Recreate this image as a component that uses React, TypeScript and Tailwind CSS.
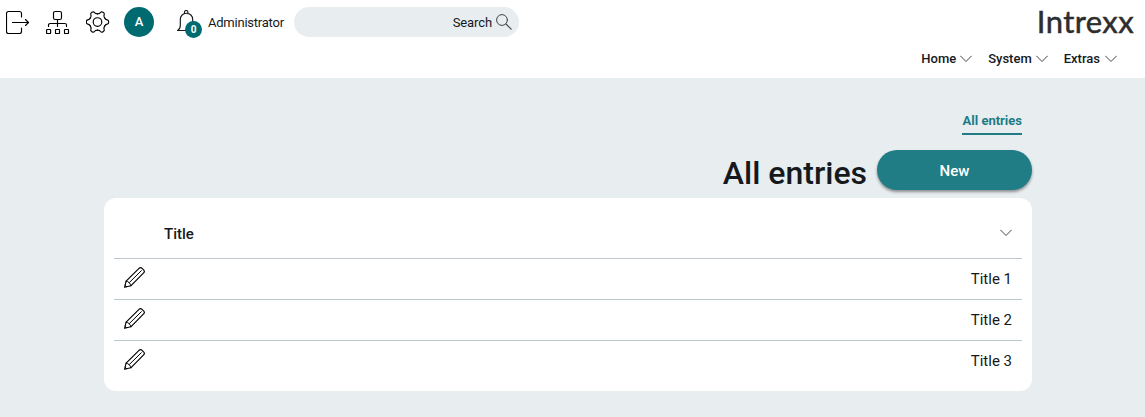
import type { ReactNode } from "react";

const navItems = ["Home", "System", "Extras"];
const entries = ["Title 1", "Title 2", "Title 3"];
const gearTeeth = [0, 60, 120, 180, 240, 300];

function LineIcon({
  width,
  height,
  className = "",
  children,
}: {
  width: number;
  height: number;
  className?: string;
  children: ReactNode;
}) {
  return (
    <svg
      width={width}
      height={height}
      viewBox={`0 0 ${width} ${height}`}
      fill="none"
      stroke="currentColor"
      strokeWidth="1.15"
      strokeLinecap="round"
      strokeLinejoin="round"
      className={`shrink-0 ${className}`}
      aria-hidden="true"
    >
      {children}
    </svg>
  );
}

function LogoutIcon() {
  return (
    <LineIcon width={24} height={24}>
      <path d="M15.500 7V3.500a2 2 0 0 0-2-2h-11a2 2 0 0 0-2 2v18a2 2 0 0 0 2 2h11a2 2 0 0 0 2-2V18" />
      <path d="M6.500 12.500h16M19.500 9.500l3 3-3 3" />
    </LineIcon>
  );
}

function SitemapIcon() {
  return (
    <LineIcon width={24} height={24}>
      <rect x="7.500" y="1.500" width="8" height="8" rx="1.800" />
      <path d="M11.500 9.500v7M2.500 16.500v-1.400a1.600 1.600 0 0 1 1.600-1.600h14.800a1.600 1.600 0 0 1 1.600 1.600v1.400" />
      <rect x=".6" y="19.500" width="4" height="4" rx=".5" />
      <rect x="9.500" y="19.500" width="4" height="4" rx=".5" />
      <rect x="18.500" y="19.500" width="4" height="4" rx=".5" />
    </LineIcon>
  );
}

function GearIcon() {
  return (
    <LineIcon width={24} height={24}>
      <circle cx="11.500" cy="12" r="4.300" />
      <g transform="translate(-.5 0)">
        {gearTeeth.map((angle) => (
          <path
            key={angle}
            d="M19.100 7.900C19.900 9.300 20.500 9.900 21.700 9.900Q23.200 10 23.200 12Q23.200 14 21.700 14.100C20.500 14.100 19.900 14.700 19.100 16.100"
            transform={`rotate(${angle} 12 12)`}
          />
        ))}
      </g>
    </LineIcon>
  );
}

function BellIcon() {
  return (
    <LineIcon width={20} height={24}>
      <path d="M7.500 3.700V2.200a1.700 1.700 0 0 1 3.400 0v1.500M.6 20.500h17.200l-2.100-4.200V9.500c0-3.600-2.700-6.300-6.200-6.300S3.300 5.900 3.300 9.500v6c0 2-.8 3.800-2.700 5z" />
    </LineIcon>
  );
}

function SearchIcon() {
  return (
    <LineIcon width={16} height={16} className="text-[#444]">
      <circle cx="6" cy="6" r="5.400" strokeWidth="1" />
      <path d="m10 10 5.200 5.200" />
    </LineIcon>
  );
}

function ChevronIcon() {
  return (
    <LineIcon width={12} height={8} className="text-[#444]">
      <path d="m.5 1 5.500 5.500L11.500 1" strokeWidth="1" />
    </LineIcon>
  );
}

function PencilIcon() {
  return (
    <LineIcon width={21} height={21}>
      <path d="M.6 20.300 2.100 14.200 15 1.400c.9-.9 2.100-.9 3-.1l1.600 1.600c.9.900.9 2.100 0 3L6.800 18.800z" />
      <path d="M2.100 14.200c2.400.1 4.500 2.200 4.700 4.600" strokeWidth="1" />
      <path d="M5.400 15.500 17.300 3.700" strokeWidth="1" />
      <path d="m1.100 18.300 1.500 1.500" strokeWidth="1" />
    </LineIcon>
  );
}

export default function App() {
  return (
    <div className="min-h-screen bg-[#e8edf0] font-['Roboto',sans-serif] text-[#15191c]">
      <header className="h-[78px] bg-white">
        <div className="flex h-11 items-center pl-1.5">
          <div className="flex items-center gap-4 text-black">
            <LogoutIcon />
            <SitemapIcon />
            <GearIcon />
          </div>
          <div className="ml-3.5 flex size-[30px] items-center justify-center rounded-full bg-[#006a71] text-[13px] font-medium text-white">
            A
          </div>
          <div className="relative ml-[23px] h-6 w-5">
            <BellIcon />
            <span className="absolute top-[11px] left-2 flex size-[17px] items-center justify-center rounded-full bg-[#006a71] text-[10px] font-bold text-white">
              0
            </span>
          </div>
          <span className="ml-[11px] w-[76px] pt-0.5 text-[13px] tracking-[-0.23px] whitespace-nowrap">
            Administrator
          </span>
          <div className="ml-[10px] flex h-[30px] w-[225px] items-center justify-end gap-1 rounded-full bg-[#e8edf0] pr-[7px] text-[13px]">
            <span className="pt-0.5 tracking-[-0.1px]">Search</span>
            <SearchIcon />
          </div>
          <div className="mr-[11px] mb-0.5 ml-auto font-['Lato',sans-serif] text-[31px] leading-none tracking-[0.4px] text-[#2d2d2f] [-webkit-text-stroke:0.5px_#2d2d2f]">
            Intrexx
          </div>
        </div>
        <nav className="flex h-[29px] items-center justify-end gap-4 pr-7 text-[13px] font-medium">
          {navItems.map((item) => (
            <div key={item} className="flex items-center gap-1 last:gap-[5px]">
              <span>{item}</span>
              <ChevronIcon />
            </div>
          ))}
        </nav>
      </header>

      <main className="mr-[113px] ml-[104px] pt-[33px]">
        <div className="flex justify-end pr-2.5">
          <span className="flex h-6 w-[60px] justify-end border-b-2 border-[#207c85] text-[13px] leading-5 font-bold whitespace-nowrap text-[#207c85]">
            All entries
          </span>
        </div>
        <div className="mt-[15px] flex h-10 items-center justify-end gap-2.5">
          <h1 className="pt-1.5 text-[32px] leading-10 font-medium">All entries</h1>
          <button className="h-10 w-[155px] rounded-full bg-[#207c85] pt-0.5 text-[15px] font-medium text-white shadow-[0_2px_3px_rgba(0,0,0,0.4)]">
            New
          </button>
        </div>

        <section className="mt-2 h-[193px] rounded-xl bg-white px-2.5 pt-2.5">
          <div className="flex h-[50px] items-center justify-between pr-2.5 pl-[50px]">
            <span className="pt-0.5 text-[15px] font-medium">Title</span>
            <ChevronIcon />
          </div>
          {entries.map((entry) => (
            <div
              key={entry}
              className="flex h-[41px] items-center justify-between border-t border-[#bdc7cc] px-2.5 text-[15px]"
            >
              <span className="pb-1 text-black">
                <PencilIcon />
              </span>
              <span>{entry}</span>
            </div>
          ))}
        </section>
      </main>
    </div>
  );
}
